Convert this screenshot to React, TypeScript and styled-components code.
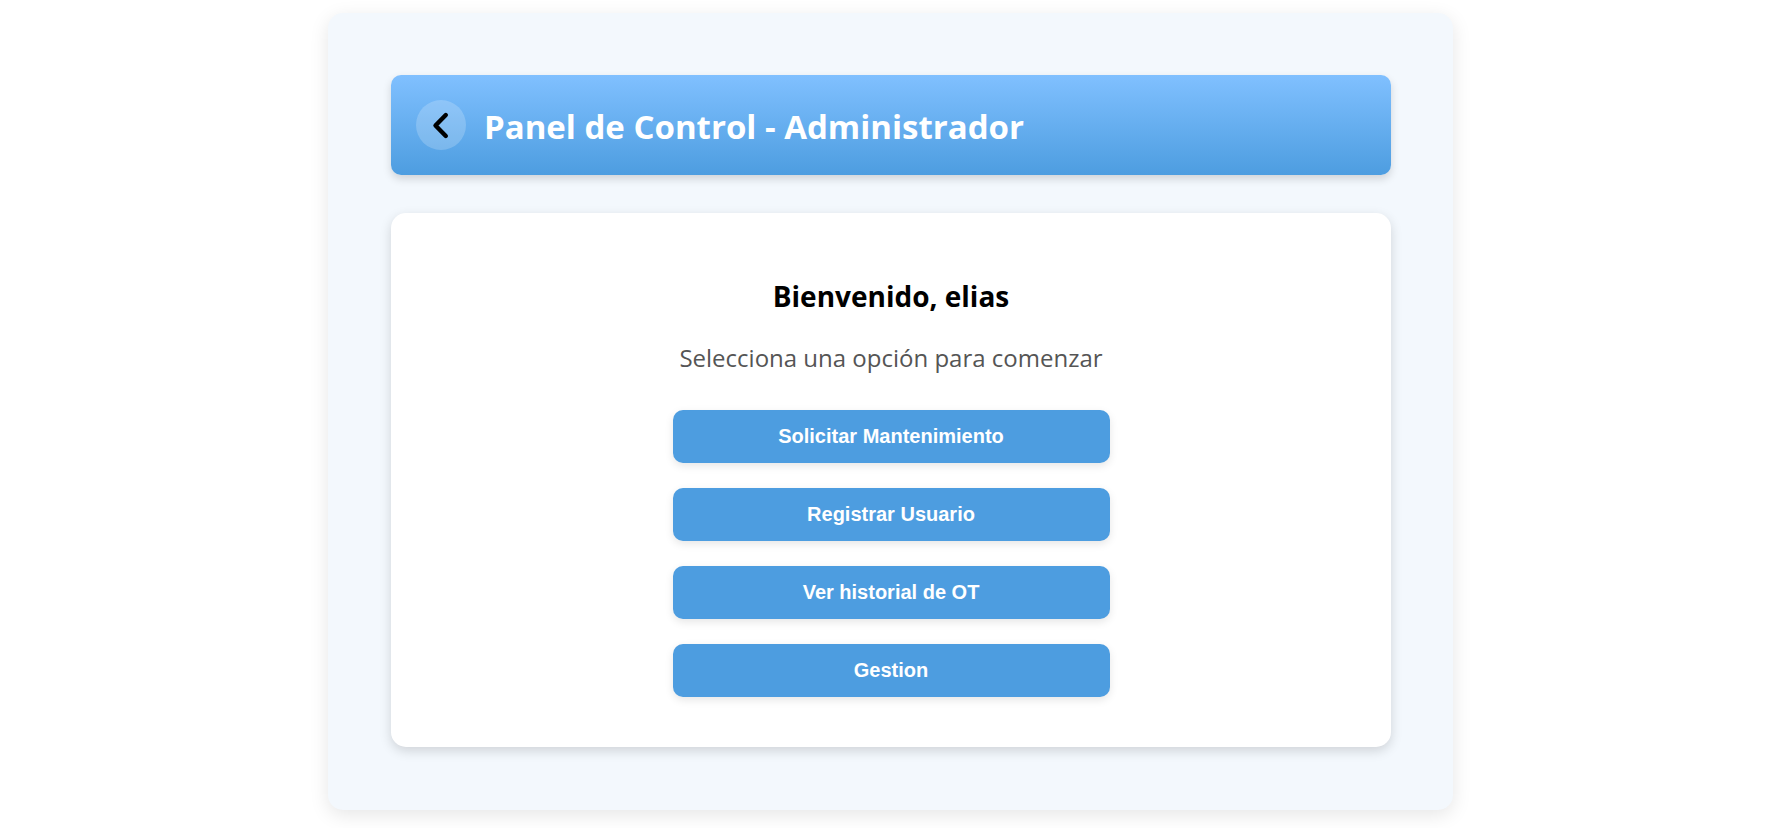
import React from "react";
import styled, { createGlobalStyle } from "styled-components";

const GlobalStyle = createGlobalStyle`
  *, *::before, *::after { box-sizing: border-box; }
  body {
    margin: 0;
    padding-right: 5px;
    background: #fff;
    color: #000;
    font-family: "Open Sans", "Segoe UI", sans-serif;
  }
`;

const Page = styled.main`
  max-width: 1125px;
  margin: 13px auto 18px;
  padding: 62px 62px 63px 63px;
  background: #f3f8fd;
  border-radius: 15px;
  box-shadow: 0 5px 19px rgba(0, 0, 0, 0.1);
`;

const Header = styled.header`
  display: flex;
  align-items: center;
  gap: 18px;
  min-height: 100px;
  margin-bottom: 38px;
  padding: 25px;
  background: linear-gradient(180deg, #80c0ff, #4d9de0);
  border-radius: 10px;
  box-shadow: 0 4px 8px rgba(0, 0, 0, 0.15);
`;

const BackButton = styled.button`
  display: flex;
  flex: none;
  align-items: center;
  justify-content: center;
  width: 50px;
  height: 50px;
  padding: 0;
  border: 0;
  border-radius: 50%;
  background: rgba(255, 255, 255, 0.2);
  color: #000;
  cursor: pointer;
`;

const Title = styled.h1`
  margin: 0;
  padding-top: 4px;
  color: #fff;
  font-size: 33px;
  line-height: 46px;
  font-weight: 700;
`;

const Card = styled.section`
  display: flex;
  flex-direction: column;
  align-items: center;
  padding: 63px 25px 50px;
  background: #fff;
  border-radius: 15px;
  box-shadow: 0 4px 12px rgba(0, 0, 0, 0.15);
  text-align: center;
`;

const Welcome = styled.h2`
  margin: 0 0 25px;
  font-size: 28px;
  line-height: 40px;
  font-weight: 700;
`;

const Hint = styled.p`
  margin: 0 0 35px;
  color: #555;
  font-size: 24px;
  line-height: 34px;
`;

const Actions = styled.nav`
  display: flex;
  flex-direction: column;
  gap: 25px;
  width: 100%;
  max-width: 437px;
`;

const ActionButton = styled.button`
  padding: 15px 25px;
  border: 0;
  border-radius: 10px;
  background: #4d9de0;
  box-shadow: 0 3px 8px rgba(0, 0, 0, 0.1);
  color: #fff;
  font-family: Arial, "Liberation Sans", sans-serif;
  font-size: 20px;
  line-height: 23px;
  font-weight: 700;
  cursor: pointer;
`;

const actions = ["Solicitar Mantenimiento", "Registrar Usuario", "Ver historial de OT", "Gestion"];

export default function App() {
  return (
    <>
      <GlobalStyle />
      <Page>
        <Header>
          <BackButton type="button" aria-label="Volver">
            <svg width="30" height="30" viewBox="0 0 30 30" fill="none" aria-hidden="true">
              <path d="M19.8 5 L9.5 15.5 L19.8 26" stroke="currentColor" strokeWidth="4.4" strokeLinecap="round" strokeLinejoin="round" />
            </svg>
          </BackButton>
          <Title>Panel de Control - Administrador</Title>
        </Header>
        <Card>
          <Welcome>Bienvenido, elias</Welcome>
          <Hint>Selecciona una opción para comenzar</Hint>
          <Actions>
            {actions.map((label) => (
              <ActionButton type="button" key={label}>{label}</ActionButton>
            ))}
          </Actions>
        </Card>
      </Page>
    </>
  );
}
